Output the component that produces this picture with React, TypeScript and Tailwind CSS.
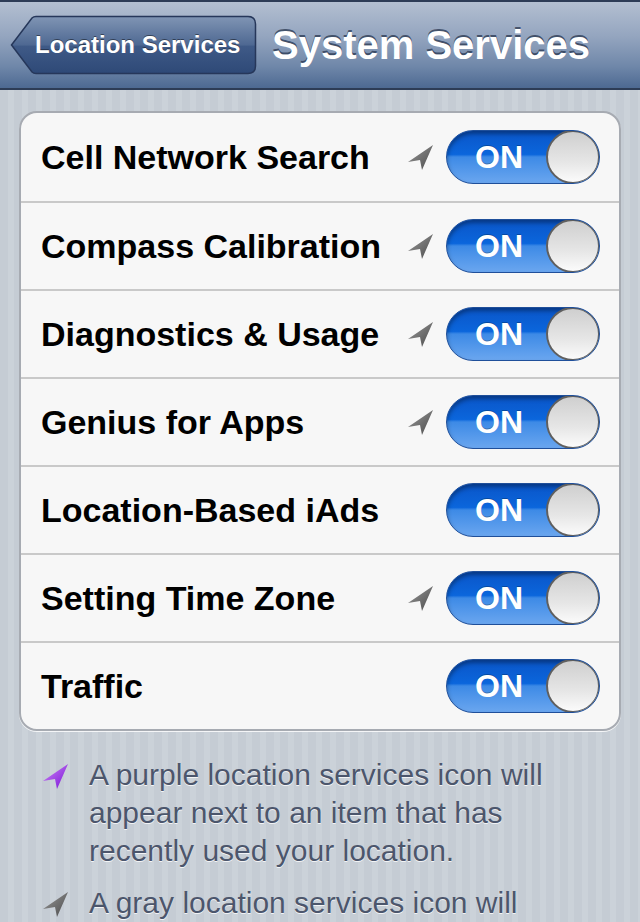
import React from "react";

const rows = [
  { label: "Cell Network Search", arrow: true },
  { label: "Compass Calibration", arrow: true },
  { label: "Diagnostics & Usage", arrow: true },
  { label: "Genius for Apps", arrow: true },
  { label: "Location-Based iAds", arrow: false },
  { label: "Setting Time Zone", arrow: true },
  { label: "Traffic", arrow: false },
];

function Arrow({ color = "gray" }: { color?: "gray" | "purple" }) {
  const id = color === "purple" ? "arrP" : "arrG";
  return (
    <svg width="25" height="25" viewBox="0 0 25 25">
      <defs>
        <linearGradient id={id} x1="0" y1="0" x2="1" y2="1">
          {color === "purple" ? (
            <>
              <stop offset="0" stopColor="#d08af5" />
              <stop offset="1" stopColor="#7810d8" />
            </>
          ) : (
            <>
              <stop offset="0" stopColor="#9a9a9a" />
              <stop offset="1" stopColor="#4a4a4a" />
            </>
          )}
        </linearGradient>
      </defs>
      <polygon points="25,0 0,17 12,15 14,25" fill={`url(#${id})`} />
    </svg>
  );
}

function Toggle() {
  return (
    <div className="relative w-[154px] h-[54px] rounded-full overflow-hidden border border-[#1f4f9a] bg-[linear-gradient(180deg,#0a55c8_0%,#0b66dc_45%,#3d8ae6_50%,#6aa6ef_100%)] shadow-[inset_0_3px_4px_rgba(0,0,0,0.35)]">
      <div className="absolute left-0 top-0 h-full w-[104px] flex items-center justify-center">
        <span className="text-white font-bold text-[32px] leading-none [text-shadow:0_-1px_0_rgba(0,0,0,0.25)]">
          ON
        </span>
      </div>
      <div className="absolute right-[-1px] top-[-1px] w-[54px] h-[54px] rounded-full border-2 border-[#5f5f5f] bg-[linear-gradient(180deg,#cfcfcf_0%,#e6e6e6_60%,#fbfbfb_100%)]" />
    </div>
  );
}

export default function App() {
  return (
    <div
      className="w-[640px] h-[922px] overflow-hidden bg-[repeating-linear-gradient(90deg,#c5ccd4_0px,#c5ccd4_8px,#cbd2d9_8px,#cbd2d9_14px)]"
      style={{ fontFamily: '"Liberation Sans", Arial, sans-serif' }}
    >
      {/* Nav bar */}
      <div className="h-[90px] border-t-2 border-b-2 border-t-[#2d3c56] border-b-[#2d3c56] bg-[linear-gradient(180deg,#b3bfd1_0%,#94a5bf_40%,#6f87a9_75%,#4d6992_100%)] flex items-center pl-[10px]">
        <div className="relative w-[247px] h-[60px] flex items-center">
          <svg className="absolute inset-0" width="247" height="60" viewBox="0 0 247 60">
            <defs>
              <linearGradient id="bb" x1="0" y1="0" x2="0" y2="1">
                <stop offset="0" stopColor="#8095b4" />
                <stop offset="0.5" stopColor="#4e6892" />
                <stop offset="0.52" stopColor="#3f5a87" />
                <stop offset="1" stopColor="#2e4977" />
              </linearGradient>
            </defs>
            <path
              d="M1.5,30 L22,3 Q23.5,1.5 26,1.5 H238 Q245.5,1.5 245.5,9 V51 Q245.5,58.5 238,58.5 H26 Q23.5,58.5 22,57 Z"
              fill="url(#bb)"
              stroke="#26375a"
              strokeWidth="1.5"
            />
          </svg>
          <span className="relative pl-[25px] text-white font-bold text-[24px] leading-none [text-shadow:0_-1px_0_rgba(0,0,0,0.45)]">
            Location Services
          </span>
        </div>
        <div className="ml-[15px] text-white font-bold text-[40px] leading-none [text-shadow:0_-2px_0_rgba(30,45,70,0.7)]">
          System Services
        </div>
      </div>

      {/* Card */}
      <div className="px-[19px] pt-[21px]">
        <div className="rounded-[18px] border-2 border-[#a7abb2] bg-[#f7f7f7] overflow-hidden shadow-[0_1px_0_rgba(255,255,255,0.8)]">
          {rows.map((r, i) => (
            <div
              key={r.label}
              className={`h-[88px] flex items-center pl-[20px] pr-[19px] ${i > 0 ? "border-t-2 border-[#c9c9c9]" : ""}`}
            >
              <div className="flex-1 text-black font-bold text-[34px] leading-none">{r.label}</div>
              {r.arrow && (
                <div className="mr-[13px] flex items-center">
                  <Arrow />
                </div>
              )}
              <Toggle />
            </div>
          ))}
        </div>
      </div>

      {/* Footer */}
      <div className="pl-[43px] pr-[30px] pt-[25px] flex flex-col gap-[14px] text-[#4c566c] text-[30px] leading-[38px] [text-shadow:0_1px_0_rgba(255,255,255,0.8)]">
        <div className="flex gap-[21px]">
          <div className="pt-[8px] shrink-0">
            <Arrow color="purple" />
          </div>
          <p>A purple location services icon will appear next to an item that has recently used your location.</p>
        </div>
        <div className="flex gap-[21px]">
          <div className="pt-[8px] shrink-0">
            <Arrow />
          </div>
          <p>A gray location services icon will appear next to an item that has used your location within the last 24 hours.</p>
        </div>
      </div>
    </div>
  );
}
